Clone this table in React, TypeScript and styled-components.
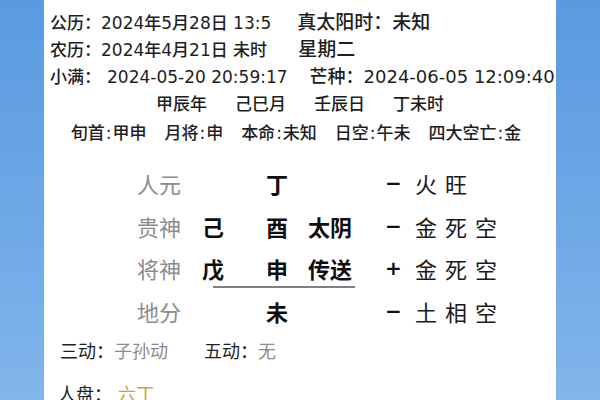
import React from "react";
import styled, { createGlobalStyle } from "styled-components";

const GlobalStyle = createGlobalStyle`
  html, body { margin: 0; padding: 0; }
  body {
    font-family: "DejaVu Sans", "Noto Sans CJK SC", sans-serif;
    color: #222;
  }
`;

const Page = styled.div`
  width: 600px;
  height: 400px;
  overflow: hidden;
  box-sizing: border-box;
  padding: 0 44px;
  background: linear-gradient(180deg, #5a9ae0 0%, #6ea8e6 55%, #82b6eb 100%);
`;

const Card = styled.div`
  height: 100%;
  background: #fff;
  overflow: hidden;
  padding-left: 6px;
  box-sizing: border-box;
`;

const Content = styled.div`
  margin-top: -21px;
`;

const InfoLine = styled.div`
  font-size: 17px;
  font-weight: 500;
  line-height: 27px;
  height: 27px;
  white-space: nowrap;
  color: #1e1e1e;
  display: flex;
  align-items: baseline;
`;

const TopLine = styled(InfoLine)`
  height: 30px;
`;

const Part = styled.span<{ $size?: number }>`
  font-size: ${(p) => p.$size ?? 17}px;
`;

const Gap = styled.span<{ $w: number }>`
  display: inline-block;
  width: ${(p) => p.$w}px;
`;

const CenterLine = styled.div<{ $gap: number; $shift?: number }>`
  font-size: 17px;
  font-weight: 500;
  line-height: 29px;
  height: 29px;
  white-space: nowrap;
  color: #1e1e1e;
  display: flex;
  justify-content: center;
  gap: ${(p) => p.$gap}px;
  padding-right: ${(p) => p.$shift ?? 6}px;
`;

const Colon = styled.span`
  margin: 0 1px;
`;

const Table = styled.div`
  margin-top: 14px;
  margin-left: 87px;
  font-family: "Noto Sans CJK SC", sans-serif;
`;

const Row = styled.div`
  display: grid;
  grid-template-columns: 65px 64px 42px 80px 27px auto;
  align-items: center;
  height: 42.5px;
  font-size: 22px;
`;

const Label = styled.span`
  color: #8c8c8c;
`;

const Strong = styled.span`
  color: #0e0e0e;
  font-weight: 700;
`;

const Sign = styled.span`
  color: #111;
  font-weight: 700;
  font-family: "DejaVu Sans", sans-serif;
  font-size: 20px;
  margin-left: -3px;
`;

const Element = styled.span`
  color: #1a1a1a;
  letter-spacing: 8px;
`;

const Divider = styled.div`
  margin: -4px 0 2px 76px;
  width: 142px;
  height: 2px;
  background: #808080;
`;

const MoveLine = styled.div`
  margin-top: 5px;
  margin-left: 10px;
  font-size: 18px;
  line-height: 27px;
  white-space: nowrap;
  display: flex;
  font-family: "Noto Sans CJK SC", sans-serif;
`;

const Key = styled.span`
  color: #1e1e1e;
`;

const Value = styled.span<{ $tone?: "gray" | "gold" }>`
  color: ${(p) => (p.$tone === "gold" ? "#c8a43c" : "#8c8c8c")};
`;

const PanLine = styled(MoveLine)`
  margin-top: 16px;
  margin-left: 8px;
`;

const rows = [
  { label: "人元", a: "", b: "丁", c: "", sign: "−", el: "火旺" },
  { label: "贵神", a: "己", b: "酉", c: "太阴", sign: "−", el: "金死空" },
  { label: "将神", a: "戊", b: "申", c: "传送", sign: "+", el: "金死空" },
  { label: "地分", a: "", b: "未", c: "", sign: "−", el: "土相空" },
];

export default function App() {
  return (
    <>
      <GlobalStyle />
      <Page>
        <Card>
          <Content>
            <TopLine>姓名：未填写</TopLine>
            <InfoLine>
              <Part>公历：2024年5月28日 13:5</Part>
              <Gap $w={26} />
              <Part $size={19}>真太阳时：未知</Part>
            </InfoLine>
            <InfoLine>
              <Part>农历：2024年4月21日 未时</Part>
              <Gap $w={31} />
              <Part $size={19}>星期二</Part>
            </InfoLine>
            <InfoLine>
              <Part>
                小满：<Gap $w={6} />2024-05-20 20:59:17
              </Part>
              <Gap $w={22} />
              <Part $size={18}>芒种：2024-06-05 12:09:40</Part>
            </InfoLine>
            <CenterLine $gap={28}>
              <span>甲辰年</span>
              <span>己巳月</span>
              <span>壬辰日</span>
              <span>丁未时</span>
            </CenterLine>
            <CenterLine $gap={18} $shift={14}>
              <span>旬首<Colon>:</Colon>甲申</span>
              <span>月将<Colon>:</Colon>申</span>
              <span>本命<Colon>:</Colon>未知</span>
              <span>日空<Colon>:</Colon>午未</span>
              <span>四大空亡<Colon>:</Colon>金</span>
            </CenterLine>
            <Table>
              {rows.map((r, i) => (
                <React.Fragment key={r.label}>
                  <Row>
                    <Label>{r.label}</Label>
                    <Strong>{r.a}</Strong>
                    <Strong>{r.b}</Strong>
                    <Strong>{r.c}</Strong>
                    <Sign>{r.sign}</Sign>
                    <Element>{r.el}</Element>
                  </Row>
                  {i === 2 && <Divider />}
                </React.Fragment>
              ))}
            </Table>
            <MoveLine>
              <Key>三动：</Key>
              <Value>子孙动</Value>
              <Gap $w={36} />
              <Key>五动：</Key>
              <Value>无</Value>
            </MoveLine>
            <PanLine>
              <Key>人盘：</Key>
              <Gap $w={6} />
              <Value $tone="gold">六丁</Value>
            </PanLine>
          </Content>
        </Card>
      </Page>
    </>
  );
}
